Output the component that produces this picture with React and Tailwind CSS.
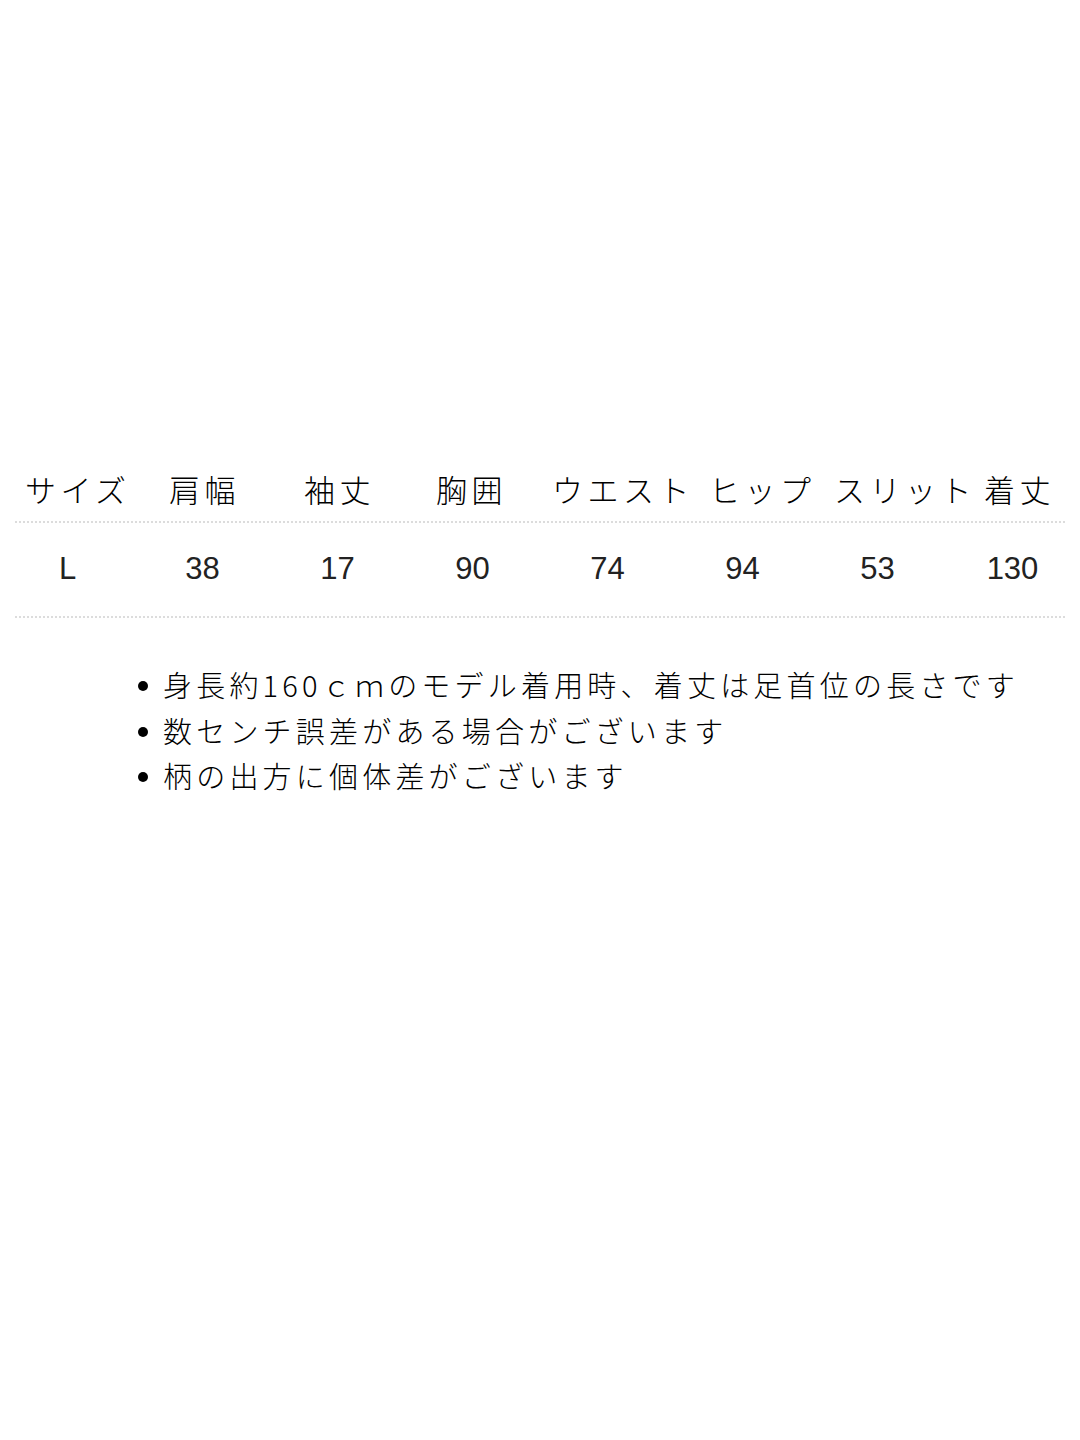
import React from "react";

const headers = [
  { t: "サイズ", w: "w-[144px]" },
  { t: "肩幅", w: "w-[135px]" },
  { t: "袖丈", w: "w-[132px]" },
  { t: "胸囲", w: "w-[116px]" },
  { t: "ウエスト", w: "w-[157px]" },
  { t: "ヒップ", w: "w-[125px]" },
  { t: "スリット", w: "w-[150px]" },
  { t: "着丈", w: "w-[90px]" },
];

const values = ["L", "38", "17", "90", "74", "94", "53", "130"];

const notes = [
  "身長約160ｃｍのモデル着用時、着丈は足首位の長さです",
  "数センチ誤差がある場合がございます",
  "柄の出方に個体差がございます",
];

const jp = { fontFamily: '"Noto Sans CJK JP", "Noto Sans", sans-serif' };

export default function App() {
  return (
    <div className="w-[1080px] h-[1440px] bg-white flex flex-col">
      <div className="h-[469px]" />
      <div
        className="flex pl-[25px] text-[31px] leading-[40px] tracking-[4.5px] text-black font-light"
        style={jp}
      >
        {headers.map((h) => (
          <span key={h.t} className={`${h.w} shrink-0 whitespace-nowrap`}>
            {h.t}
          </span>
        ))}
      </div>
      <div className="mt-[12px] mx-[15px] border-t-2 border-dotted border-[#dcdcdc]" />
      <div
        className="grid grid-cols-8 h-[93px] items-center text-[31px] text-[#222]"
        style={{ fontFamily: '"Liberation Sans", Arial, sans-serif' }}
      >
        {values.map((v, i) => (
          <div key={i} className="text-center">
            {v}
          </div>
        ))}
      </div>
      <div className="mx-[15px] border-t-2 border-dotted border-[#dcdcdc]" />
      <ul
        className="mt-[44px] pl-[163px] flex flex-col text-[29px] leading-[45.5px] tracking-[4.2px] text-black font-light"
        style={jp}
      >
        {notes.map((n) => (
          <li key={n} className="relative whitespace-nowrap">
            <span className="absolute left-[-25px] top-[19px] w-[10px] h-[10px] rounded-full bg-black" />
            {n}
          </li>
        ))}
      </ul>
    </div>
  );
}
